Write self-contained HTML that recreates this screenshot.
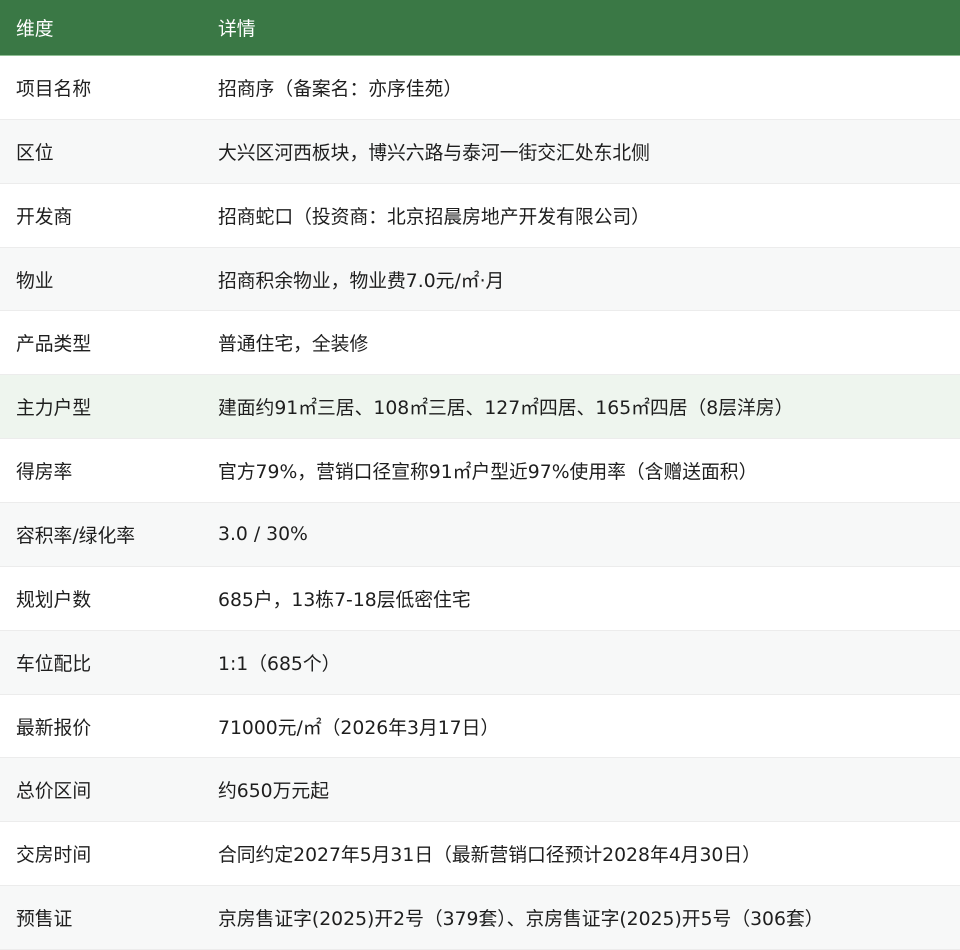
<!DOCTYPE html>
<html><head><meta charset="utf-8"><style>
body{margin:0;width:960px;height:950px;overflow:hidden;background:#fff;font-family:"DejaVu Sans","Noto Sans CJK SC",sans-serif;font-size:18.8px;color:#1e1e1e;}
.h{height:56px;background:#3a7845;color:#fff;display:flex;align-items:center;border-bottom:1px solid #8fbf94;box-sizing:border-box;}
.r{height:63.86px;display:flex;align-items:center;border-bottom:1px solid #ececec;box-sizing:border-box;}
.r:nth-child(even){background:#f7f8f8;}
.r.hl{background:#eef5ee;}
.a{width:218px;padding-left:16px;box-sizing:border-box;flex:none;}
.b{flex:1;white-space:nowrap;}
</style></head><body>
<div class="h"><div class="a">维度</div><div class="b">详情</div></div>
<div>
<div class="r"><div class="a">项目名称</div><div class="b">招商序（备案名：亦序佳苑）</div></div>
<div class="r"><div class="a">区位</div><div class="b">大兴区河西板块，博兴六路与泰河一街交汇处东北侧</div></div>
<div class="r"><div class="a">开发商</div><div class="b">招商蛇口（投资商：北京招晨房地产开发有限公司）</div></div>
<div class="r"><div class="a">物业</div><div class="b">招商积余物业，物业费7.0元/㎡·月</div></div>
<div class="r"><div class="a">产品类型</div><div class="b">普通住宅，全装修</div></div>
<div class="r hl"><div class="a">主力户型</div><div class="b">建面约91㎡三居、108㎡三居、127㎡四居、165㎡四居（8层洋房）</div></div>
<div class="r"><div class="a">得房率</div><div class="b">官方79%，营销口径宣称91㎡户型近97%使用率（含赠送面积）</div></div>
<div class="r"><div class="a">容积率/绿化率</div><div class="b">3.0 / 30%</div></div>
<div class="r"><div class="a">规划户数</div><div class="b">685户，13栋7-18层低密住宅</div></div>
<div class="r"><div class="a">车位配比</div><div class="b">1:1（685个）</div></div>
<div class="r"><div class="a">最新报价</div><div class="b">71000元/㎡（2026年3月17日）</div></div>
<div class="r"><div class="a">总价区间</div><div class="b">约650万元起</div></div>
<div class="r"><div class="a">交房时间</div><div class="b">合同约定2027年5月31日（最新营销口径预计2028年4月30日）</div></div>
<div class="r"><div class="a">预售证</div><div class="b">京房售证字(2025)开2号（379套）、京房售证字(2025)开5号（306套）</div></div>
</div>
</body></html>
